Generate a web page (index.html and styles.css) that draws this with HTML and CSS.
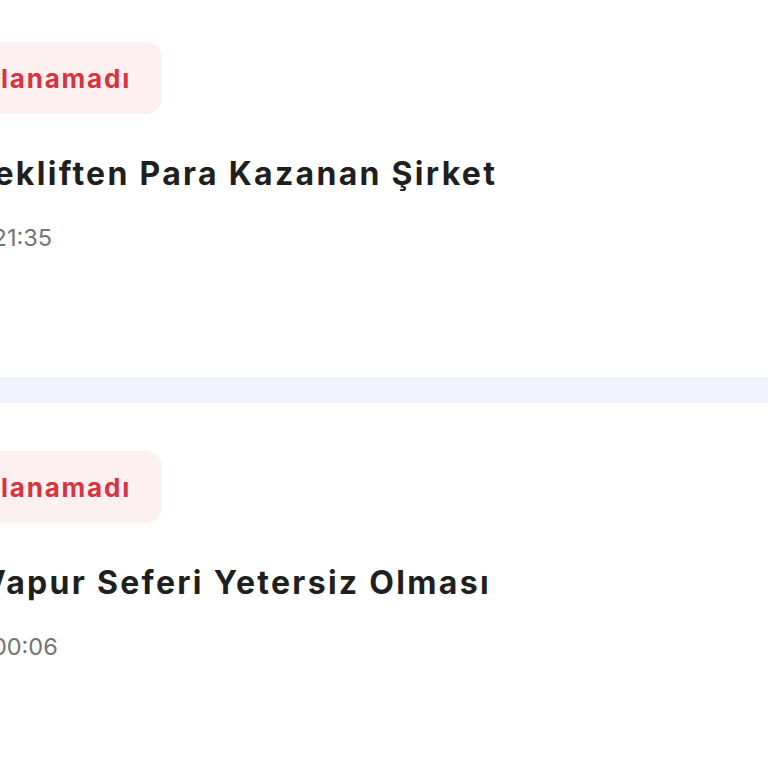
FILE: index.html
```html
<!DOCTYPE html>
<html lang="tr">
<head>
    <meta charset="UTF-8">
    <meta name="viewport" content="width=device-width, initial-scale=1.0">
    <title>Şikayetler</title>
    <link rel="stylesheet" href="styles.css">
</head>
<body>
    <div class="list">
        <div class="card first">
            <div class="card-inner">
                <span class="status">Doğrulanamadı</span>
                <h2 class="title">Sahte Tekliften Para Kazanan Şirket</h2>
                <p class="time">14.03.2024 21:35</p>
            </div>
        </div>
        <div class="divider"></div>
        <div class="card">
            <div class="card-inner">
                <span class="status">Doğrulanamadı</span>
                <h2 class="title">Sabah Vapur Seferi Yetersiz Olması</h2>
                <p class="time">15.03.2024 00:06</p>
            </div>
        </div>
    </div>
</body>
</html>
```
FILE: styles.css
```css
body {
    margin: 0;
    background-color: #fff;
    font-family: Inter, "Open Sans", sans-serif;
    overflow: hidden;
}
.list { width: 768px; overflow: hidden; }
.card { padding: 48px 0 123px; }
.card.first { margin-top: -6px; }
.card-inner {
    display: flex;
    flex-direction: column;
    align-items: flex-start;
    margin-left: -138px;
    white-space: nowrap;
}
.status {
    display: inline-flex;
    align-items: center;
    height: 72px;
    padding: 0 31px 0 52px;
    border-radius: 16px;
    background-color: #fdf0f1;
    color: #d8343f;
    font-size: 26px;
    font-weight: 700;
    letter-spacing: 1.8px;
}
.title {
    margin: 40px 0 0;
    font-size: 32px;
    line-height: 40px;
    font-weight: 700;
    letter-spacing: 2.3px;
    color: #1f1f1f;
}
.time {
    margin: 28px 0 0;
    font-size: 23.5px;
    line-height: 32px;
    color: #757575;
}
.divider {
    height: 26px;
    background-color: #f0f2fc;
}
```
